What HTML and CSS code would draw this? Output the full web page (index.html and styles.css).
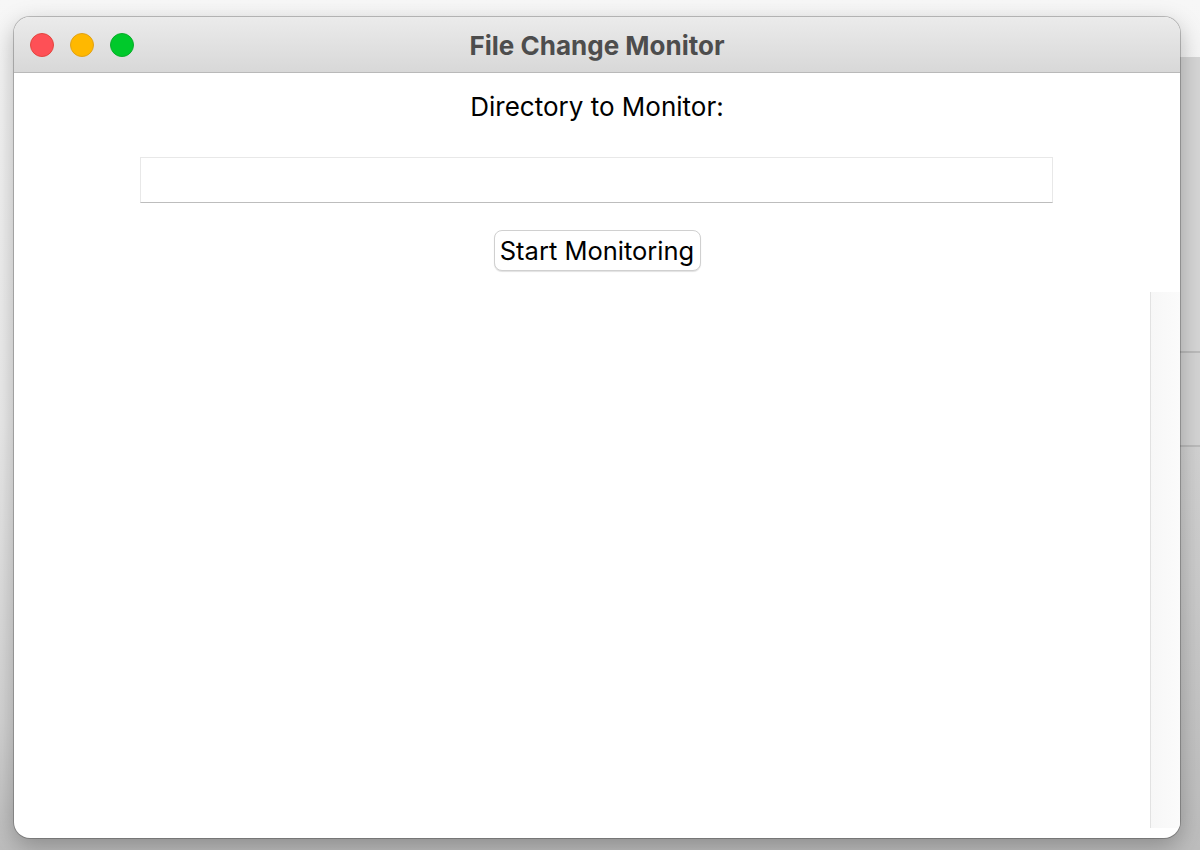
FILE: index.html
```html
<!DOCTYPE html>
<html>
<head>
<meta charset="utf-8">
<link rel="stylesheet" href="styles.css">
</head>
<body>
<div class="desk">
  <div class="window">
    <div class="titlebar">
      <div class="lights">
        <span class="light red"></span>
        <span class="light yellow"></span>
        <span class="light green"></span>
      </div>
      <div class="title">File Change Monitor</div>
    </div>
    <div class="content">
      <div class="label">Directory to Monitor:</div>
      <input class="dir-input" type="text">
      <button class="btn">Start Monitoring</button>
      <div class="log">
        <div class="log-text"></div>
        <div class="scrollbar"></div>
      </div>
    </div>
  </div>
  <div class="behind">
    <div class="behind-top"></div>
    <div class="behind-row"></div>
    <div class="behind-row2"></div>
  </div>
</div>
</body>
</html>
```

FILE: styles.css
```css
html, body {
  margin: 0;
  padding: 0;
  width: 1200px;
  height: 850px;
  overflow: hidden;
}
body {
  background: linear-gradient(to bottom, #f7f7f7 0%, #ececec 50%, #d4d4d4 85%, #bdbdbd 100%);
  font-family: Inter, "Liberation Sans", sans-serif;
}
.desk {
  display: flex;
  padding: 17px 0 0 14px;
  height: 850px;
  box-sizing: border-box;
}
.window {
  width: 1166px;
  height: 821px;
  flex: none;
  background: #fff;
  border-radius: 16px;
  box-shadow: 0 0 0 1px rgba(0,0,0,0.22), 0 8px 24px rgba(0,0,0,0.28);
  display: flex;
  flex-direction: column;
  overflow: hidden;
  position: relative;
  z-index: 1;
}
.titlebar {
  height: 56px;
  flex: none;
  box-sizing: border-box;
  background: linear-gradient(to bottom, #ebebeb, #d8d8d8);
  border-bottom: 1px solid #b9b9b9;
  display: flex;
  align-items: center;
  position: relative;
}
.lights {
  display: flex;
  gap: 16px;
  padding-left: 16px;
  position: absolute;
  left: 0;
  top: 16px;
}
.light {
  width: 24px;
  height: 24px;
  border-radius: 50%;
  box-sizing: border-box;
}
.red { background: #fe5056; border: 1px solid #e2463f; }
.yellow { background: #ffb800; border: 1px solid #e0a116; }
.green { background: #00c92b; border: 1px solid #0aac2a; }
.title {
  flex: 1;
  text-align: center;
  font-weight: 700;
  font-size: 26px;
  color: #4d4d4d;
  padding-top: 1px;
}
.content {
  flex: 1;
  display: flex;
  flex-direction: column;
  align-items: center;
}
.label {
  font-size: 26px;
  color: #000;
  margin-top: 18px;
  line-height: 32px;
}
.dir-input {
  margin-top: 34px;
  width: 913px;
  height: 46px;
  box-sizing: border-box;
  border: 1px solid #e8e8e8;
  border-bottom: 1px solid #bdbdbd;
  outline: none;
  background: #fff;
  margin-left: -2px;
}
.btn {
  margin-top: 27px;
  width: 207px;
  height: 41px;
  box-sizing: border-box;
  border: 1px solid #d0d0d0;
  border-radius: 8px;
  background: #fff;
  box-shadow: 0 1px 1px rgba(0,0,0,0.12);
  font-family: Inter, "Liberation Sans", sans-serif;
  font-size: 25.5px;
  color: #000;
  padding: 0;
}
.log {
  margin-top: 21px;
  align-self: stretch;
  height: 536px;
  display: flex;
}
.log-text {
  flex: 1;
}
.scrollbar {
  width: 29px;
  background: linear-gradient(to right, #f7f7f7, #fbfbfb);
  border-left: 1px solid #e2e2e2;
}
.behind {
  flex: 1;
  display: flex;
  flex-direction: column;
  margin-top: 40px;
}
.behind-top {
  height: 294px;
  background: #d6d6d6;
  border-bottom: 2px solid #bbb;
}
.behind-row {
  height: 92px;
  background: #d4d4d4;
  border-bottom: 2px solid #bbb;
}
.behind-row2 {
  flex: 1;
  background: linear-gradient(to bottom, #d2d2d2, #bdbdbd);
}
```
